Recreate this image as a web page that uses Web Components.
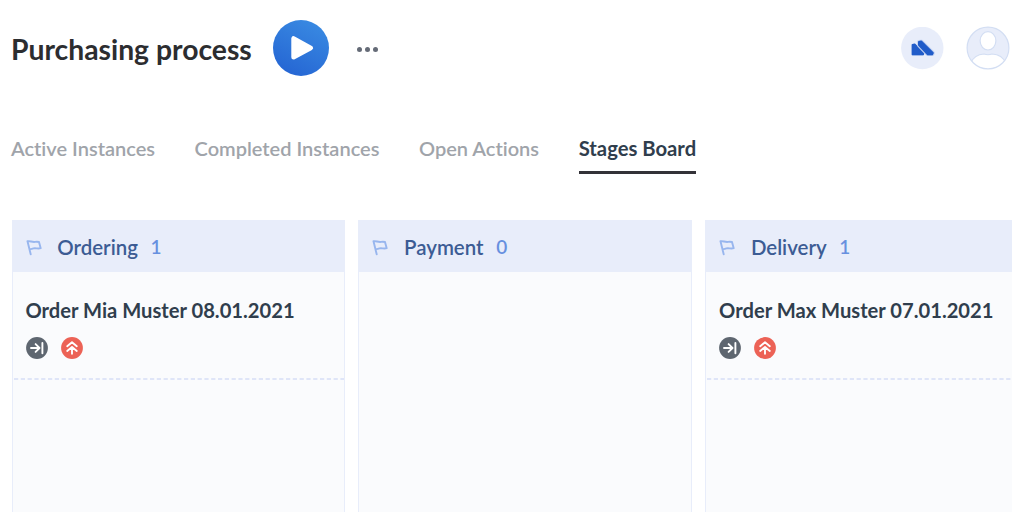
<!DOCTYPE html>
<html lang="en">
<head>
<meta charset="utf-8">
<title>Purchasing process</title>
<style>
html, body { margin: 0; height: 100%; overflow: hidden; background: #fff; }
body { font-family: Lato, "Open Sans", sans-serif; color: #2b3a4a; font-variant-ligatures: no-common-ligatures; }
</style>
</head>
<body>
<process-page></process-page>

<script>
const define = (name, html) => {
  const template = document.createElement('template');
  template.innerHTML = html;
  customElements.define(name, class extends HTMLElement {
    constructor() {
      super();
      this.attachShadow({ mode: 'open' }).append(template.content.cloneNode(true));
    }
  });
};

define('play-button', `
<style>:host{display:block;width:56px;height:56px} svg{display:block}</style>
<svg width="56" height="56" viewBox="0 0 56 56">
  <defs><linearGradient id="g" x1=".75" y1="0" x2=".25" y2="1"><stop offset="0" stop-color="#398ae2"/><stop offset="1" stop-color="#2565d3"/></linearGradient></defs>
  <circle cx="28" cy="28" r="28" fill="url(#g)"/>
  <path d="M20.600 18.500v18.800L37.800 27.900z" fill="#fff" stroke="#fff" stroke-width="4.600" stroke-linejoin="round"/>
</svg>`);

define('more-button', `
<style>:host{display:flex;gap:2.800px} i{width:5.300px;height:5.300px;border-radius:50%;background:#656b77}</style>
<i></i><i></i><i></i>`);

define('cloud-button', `
<style>:host{display:block;width:43px;height:43px} svg{display:block}</style>
<svg width="43" height="43" viewBox="0 0 43 43" stroke-linejoin="round">
  <circle cx="21.300" cy="21" r="21.200" fill="#e8edfa"/>
  <path d="M11.600 18 13.600 17.500 22.300 26.300 22 27.500H11.600z" fill="#215cc9" stroke="#215cc9" stroke-width="2"/>
  <path id="w" d="M18 15 20.200 14.400 31.800 26 31 27.500H27L18 18z" fill="#e8edfa" stroke="#c3d2f2" stroke-width="4"/>
  <path d="M18 15 20.200 14.400 31.800 26 31 27.500H27L18 18z" fill="#215cc9" stroke="#215cc9" stroke-width="2"/>
  <path d="M10 29.500H34M16 12 18 11.500 20.700 11.800" fill="none" stroke="#e8edfa" stroke-width="1.400"/>
</svg>`);

define('user-avatar', `
<style>:host{display:block;width:44px;height:44px} svg{display:block}</style>
<svg width="44" height="44" viewBox="0 0 44 44">
  <defs><clipPath id="c"><circle cx="22" cy="22" r="21"/></clipPath></defs>
  <circle cx="22" cy="22" r="21" fill="#e8edfa"/>
  <g fill="#fff" stroke="#d3def3" stroke-width="1.200" clip-path="url(#c)">
    <ellipse cx="22" cy="14.800" rx="7.900" ry="9.200"/>
    <path d="M5 37C7.500 30 13 28.300 18 28Q22 29.500 26 28C32 28.300 37 30 39.500 37V46H5z"/>
  </g>
  <circle cx="22" cy="22" r="20.900" fill="none" stroke="#d3def3" stroke-width="1.200"/>
</svg>`);

define('app-header', `
<style>
:host{display:flex;align-items:center;height:96px;padding:0 14px 0 11px;box-sizing:border-box}
h1{margin:1px 0 0;width:261.500px;font-size:28.300px;line-height:36px;font-weight:700;color:#2c2d30;white-space:nowrap}
more-button{margin:3px 0 0 28px}
cloud-button{margin-left:auto}
user-avatar{margin-left:22px}
</style>
<h1><slot></slot></h1><play-button></play-button><more-button></more-button><cloud-button></cloud-button><user-avatar></user-avatar>`);

define('nav-tab', `
<style>
:host{display:block;height:37.500px;box-sizing:border-box;font-size:20px;line-height:24px;font-weight:600;color:#a0a4aa;white-space:nowrap}
:host([active]){font-size:20.250px;line-height:25px;font-weight:700;color:#303e4d;border-bottom:3px solid #333238}
</style><slot></slot>`);

define('nav-tabs', `
<style>:host{display:flex;gap:39.600px;padding:40px 0 0 11px;height:124px;box-sizing:border-box;align-items:flex-start}</style><slot></slot>`);

define('flag-icon', `
<style>:host{display:block;width:16px;height:16px} svg{display:block}</style>
<svg width="16" height="16" viewBox="0 0 16 16" fill="none" stroke="#98b6ee" stroke-width="1.900" stroke-linecap="round" stroke-linejoin="round">
  <path d="M4.700 14.300 1.500 1.200C4 .6 6 2.400 9 1.900Q11 1.500 13 2L14.700 8.200C12 9.300 10 7.700 7.500 8.400Q5 9.400 3.500 9"/>
</svg>`);

define('stage-column', `
<style>
:host{display:flex;flex-direction:column;box-sizing:border-box;background:#fafbfd;border:solid #e8edfa;border-width:0 1.500px}
header{display:flex;align-items:center;height:52px;padding:2px 0 0 13.200px;box-sizing:border-box;background:#e8edfa;font-size:20.450px;line-height:26px;font-weight:600;color:#3c5c94}
flag-icon{margin:1px 15.600px 0 0}
.n{margin-left:12.600px;color:#6790df;font-size:19px}
</style>
<header><flag-icon></flag-icon><slot name="title"></slot><span class="n"><slot name="count"></slot></span></header>
<slot></slot>`);

define('skip-badge', `
<style>:host{display:block;width:22px;height:22px} svg{display:block}</style>
<svg width="22" height="22" viewBox="0 0 22 22" fill="none" stroke="#fff" stroke-width="1.900" stroke-linecap="round" stroke-linejoin="round">
  <circle cx="11" cy="11" r="10.900" fill="#5e6670" stroke="none"/>
  <path d="M5 11h8.300M9.600 7.100l3.900 3.900-3.900 3.900M16.400 6v10.200"/>
</svg>`);

define('priority-badge', `
<style>:host{display:block;width:22px;height:22px} svg{display:block}</style>
<svg width="22" height="22" viewBox="0 0 22 22" fill="none" stroke="#fff" stroke-width="1.900" stroke-linecap="round" stroke-linejoin="round">
  <circle cx="11" cy="11" r="10.900" fill="#ec6256" stroke="none"/>
  <path d="M6.200 9.200 11 5.200l4.800 4M6.200 14 11 10l4.800 4M11 10.500v6.200"/>
</svg>`);

define('instance-card', `
<style>
:host{display:block;height:108px;box-sizing:border-box;padding:25px 0 0 13px}
h2{margin:0;font-size:20.170px;line-height:26px;font-weight:700;color:#303e4d;white-space:nowrap}
div{display:flex;gap:13px;margin-top:14px}
svg{display:block;width:calc(100% + 13px);height:2px;margin:19px 0 0 -13px}
</style>
<h2><slot></slot></h2><div><skip-badge></skip-badge><priority-badge></priority-badge></div>
<svg><path d="M1 1H340" stroke="#d6def6" stroke-width="1.600" stroke-dasharray="4.200 2.600"/></svg>`);

define('stages-board', `
<style>:host{display:grid;grid-template-columns:333.500px 333.500px 333.500px;gap:13.300px;height:292px;margin:0 12px 0 11.500px;overflow:hidden}</style><slot></slot>`);

define('process-page', `
<style>:host{display:block;height:512px;overflow:hidden}</style>
<app-header>Purchasing process</app-header>
<nav-tabs>
  <nav-tab>Active Instances</nav-tab><nav-tab>Completed Instances</nav-tab><nav-tab>Open Actions</nav-tab><nav-tab active>Stages Board</nav-tab>
</nav-tabs>
<stages-board>
  <stage-column><span slot="title">Ordering</span><span slot="count">1</span><instance-card>Order Mia Muster 08.01.2021</instance-card></stage-column>
  <stage-column><span slot="title">Payment</span><span slot="count">0</span></stage-column>
  <stage-column><span slot="title">Delivery</span><span slot="count">1</span><instance-card>Order Max Muster 07.01.2021</instance-card></stage-column>
</stages-board>`);
</script>
</body>
</html>
